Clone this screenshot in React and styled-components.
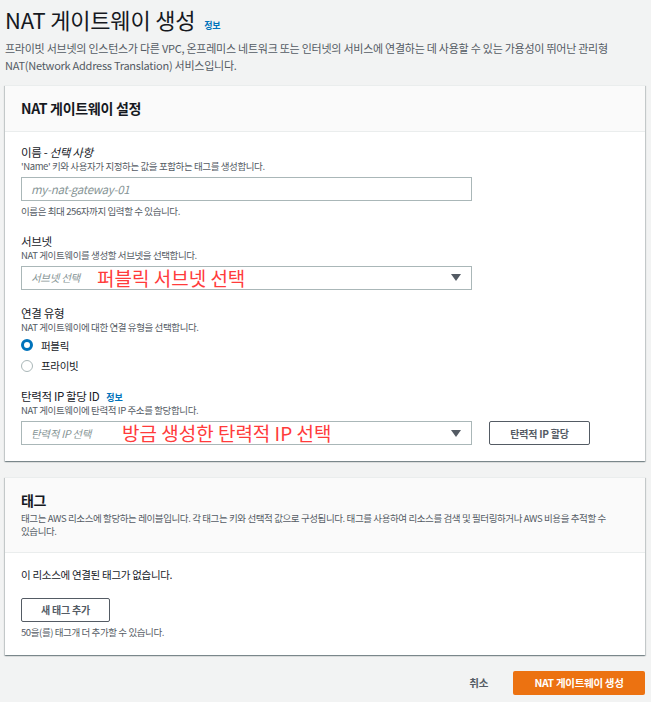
import React from 'react'
import styled, { createGlobalStyle } from 'styled-components'

const GlobalStyle = createGlobalStyle`
  body {
    margin: 0;
    background: #f2f3f3;
    font-family: "Noto Sans CJK KR", "Noto Sans", sans-serif;
    color: #16191f;
  }
`

const Page = styled.div`
  padding: 4px 6px 0 5px;
`

const Title = styled.h1`
  margin: 0;
  height: 30px;
  font-size: 22px;
  line-height: 30px;
  font-weight: 400;
  letter-spacing: -0.2px;
  display: flex;
  align-items: baseline;
  gap: 9px;
`

const InfoLink = styled.a`
  font-size: 9px;
  line-height: 1;
  font-weight: 700;
  color: #0073bb;
  letter-spacing: -0.2px;
  text-decoration: none;
`

const Intro = styled.p`
  margin: 5.5px 0 0;
  font-size: 11px;
  line-height: 17px;
  letter-spacing: -0.25px;
  color: #545b64;
  white-space: nowrap;
`

const Panel = styled.section`
  margin-top: ${p => p.$top || 16}px;
  background: #fff;
  border-top: 1px solid #eaeded;
  box-shadow: 0 1px 1px 0 rgba(0, 28, 36, 0.3), 1px 1px 1px 0 rgba(0, 28, 36, 0.15),
    -1px 1px 1px 0 rgba(0, 28, 36, 0.15);
`

const PanelHeader = styled.header`
  background: #fafafa;
  border-bottom: 1px solid #eaeded;
  padding: 13px 16px 14px;
`

const PanelTitle = styled.h2`
  margin: 0;
  font-size: 14px;
  line-height: 18px;
  font-weight: 700;
  letter-spacing: -0.3px;
`

const PanelBody = styled.div`
  padding: ${p => p.$pad || '12px 16px 16px'};
  display: flex;
  flex-direction: column;
  gap: ${p => p.$gap || 15}px;
`

const Field = styled.div`
  display: flex;
  flex-direction: column;
  margin-top: ${p => p.$shift || 0}px;
`

const Label = styled.label`
  height: 16px;
  font-size: 11.5px;
  line-height: 16px;
  letter-spacing: -0.35px;
  display: flex;
  align-items: baseline;
  gap: 7px;
  em {
    font-style: italic;
  }
`

const Desc = styled.div`
  font-size: 9.5px;
  line-height: 13px;
  letter-spacing: -0.4px;
  color: #545b64;
  margin-top: ${p => p.$top || 0}px;
  white-space: nowrap;
`

const Input = styled.div`
  margin-top: 4px;
  width: 451px;
  height: 24px;
  box-sizing: border-box;
  border: 1px solid #aab7b8;
  padding: 0 10px 0 9px;
  display: flex;
  align-items: center;
  font-size: ${p => p.$size || 10.5}px;
  font-style: italic;
  color: #879596;
  letter-spacing: -0.3px;
`

const Select = styled(Input)`
  position: relative;
  justify-content: space-between;
`

const Note = styled.span`
  position: absolute;
  left: ${p => p.$left}px;
  top: 50%;
  transform: translateY(-52%);
  font-style: normal;
  font-size: 19px;
  line-height: 1;
  letter-spacing: 0;
  color: #ff3b3b;
  white-space: nowrap;
`

const Row = styled.div`
  display: flex;
  align-items: flex-end;
  gap: 17px;
`

const Button = styled.button`
  width: ${p => (p.$w ? `${p.$w}px` : 'auto')};
  height: 24px;
  box-sizing: border-box;
  padding: 0;
  background: #fff;
  border: 1px solid #545b64;
  border-radius: 2px;
  font-family: inherit;
  font-size: 10px;
  font-weight: 700;
  letter-spacing: -0.2px;
  color: #545b64;
  cursor: pointer;
`

const RadioGroup = styled.div`
  margin-top: 1.5px;
  display: flex;
  flex-direction: column;
`

const RadioRow = styled.label`
  height: 20.5px;
  display: flex;
  align-items: center;
  gap: 8px;
  font-size: 10.5px;
  letter-spacing: -0.3px;
`

const RadioDot = styled.span`
  width: 12px;
  height: 12px;
  box-sizing: border-box;
  border-radius: 50%;
  border: ${p => (p.$on ? '3.5px solid #0073bb' : '1px solid #aab7b8')};
  background: #fff;
`

const Empty = styled.div`
  font-size: 10.5px;
  line-height: 16px;
  letter-spacing: -0.3px;
`

const TagArea = styled.div`
  display: flex;
  flex-direction: column;
  align-items: flex-start;
  gap: 4px;
`

const Footer = styled.div`
  margin-top: 16px;
  display: flex;
  justify-content: flex-end;
  align-items: center;
  gap: 25px;
`

const Cancel = styled.span`
  font-size: 10.5px;
  font-weight: 700;
  color: #545b64;
  letter-spacing: -0.3px;
`

const Primary = styled.button`
  width: 132px;
  height: 24px;
  border: none;
  border-radius: 2px;
  background: #ec7211;
  color: #fff;
  font-family: inherit;
  font-size: 10.5px;
  font-weight: 700;
  letter-spacing: -0.3px;
`

const Caret = () => (
  <svg width="10" height="7" viewBox="0 0 10 7">
    <path d="M0 0h10L5 7z" fill="#545b64" />
  </svg>
)

export default function App() {
  return (
    <Page>
      <GlobalStyle />
      <Title>
        NAT 게이트웨이 생성 <InfoLink href="#">정보</InfoLink>
      </Title>
      <Intro>
        프라이빗 서브넷의 인스턴스가 다른 VPC, 온프레미스 네트워크 또는 인터넷의 서비스에 연결하는 데 사용할 수 있는 가용성이 뛰어난 관리형
        <br />
        NAT(Network Address Translation) 서비스입니다.
      </Intro>

      <Panel $top={11.5}>
        <PanelHeader>
          <PanelTitle>NAT 게이트웨이 설정</PanelTitle>
        </PanelHeader>
        <PanelBody>
          <Field>
            <Label>
              <span>
                이름 - <em>선택 사항</em>
              </span>
            </Label>
            <Desc>'Name' 키와 사용자가 지정하는 값을 포함하는 태그를 생성합니다.</Desc>
            <Input $size={11.5}>my-nat-gateway-01</Input>
            <Desc $top={3.5}>이름은 최대 256자까지 입력할 수 있습니다.</Desc>
          </Field>

          <Field>
            <Label>서브넷</Label>
            <Desc>NAT 게이트웨이를 생성할 서브넷을 선택합니다.</Desc>
            <Select>
              서브넷 선택
              <Note $left={75}>퍼블릭 서브넷 선택</Note>
              <Caret />
            </Select>
          </Field>

          <Field>
            <Label>연결 유형</Label>
            <Desc>NAT 게이트웨이에 대한 연결 유형을 선택합니다.</Desc>
            <RadioGroup>
              <RadioRow>
                <RadioDot $on />
                퍼블릭
              </RadioRow>
              <RadioRow>
                <RadioDot />
                프라이빗
              </RadioRow>
            </RadioGroup>
          </Field>

          <Field $shift={-3}>
            <Label>
              탄력적 IP 할당 ID <InfoLink href="#">정보</InfoLink>
            </Label>
            <Desc>NAT 게이트웨이에 탄력적 IP 주소를 할당합니다.</Desc>
            <Row>
              <Select>
                탄력적 IP 선택
                <Note $left={100}>방금 생성한 탄력적 IP 선택</Note>
                <Caret />
              </Select>
              <Button $w={101}>탄력적 IP 할당</Button>
            </Row>
          </Field>
        </PanelBody>
      </Panel>

      <Panel>
        <PanelHeader>
          <PanelTitle>태그</PanelTitle>
          <Desc $top={2.5}>
            태그는 AWS 리소스에 할당하는 레이블입니다. 각 태그는 키와 선택적 값으로 구성됩니다. 태그를 사용하여 리소스를 검색 및 필터링하거나 AWS 비용을 추적할 수
            <br />
            있습니다.
          </Desc>
        </PanelHeader>
        <PanelBody $pad="14px 16px 16px" $gap={15}>
          <Empty>이 리소스에 연결된 태그가 없습니다.</Empty>
          <TagArea>
            <Button $w={89}>새 태그 추가</Button>
            <Desc>50을(를) 태그개 더 추가할 수 있습니다.</Desc>
          </TagArea>
        </PanelBody>
      </Panel>

      <Footer>
        <Cancel>취소</Cancel>
        <Primary>NAT 게이트웨이 생성</Primary>
      </Footer>
    </Page>
  )
}
